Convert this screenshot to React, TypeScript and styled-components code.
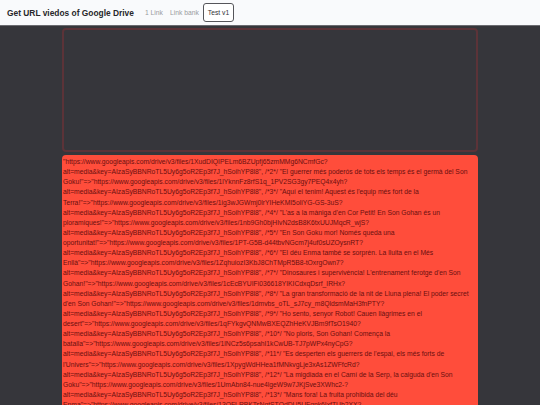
import React from "react"
import styled, { createGlobalStyle } from "styled-components"

const GlobalStyle = createGlobalStyle`
  html, body {
    margin: 0;
    padding: 0;
    height: 100%;
    overflow: hidden;
    background: #36363b;
    font-family: "Liberation Sans", Arial, sans-serif;
  }
`

const Header = styled.header`
  height: 26px;
  box-sizing: border-box;
  display: flex;
  align-items: center;
  padding-left: 7px;
  background: #f9fafc;
  border-bottom: 1px solid #6b6b70;
`

const Title = styled.h1`
  margin: 0 11px 0 0;
  font-size: 8.4px;
  font-weight: 700;
  color: #27272a;
`

const Nav = styled.nav`
  display: flex;
  align-items: center;
  gap: 7px;
`

const NavItem = styled.a<{ $active?: boolean }>`
  font-size: 6.75px;
  color: ${({ $active }) => ($active ? "#333338" : "#9a9aa0")};
  ${({ $active }) =>
    $active &&
    `
    height: 19px;
    box-sizing: border-box;
    display: flex;
    align-items: center;
    margin-left: -3px;
    padding: 0 4px;
    background: #fff;
    border: 1px solid #55555a;
    border-radius: 3px;
  `}
`

const Main = styled.main`
  display: flex;
  flex-direction: column;
  align-items: center;
  gap: 3px;
  padding-top: 2px;
`

const Input = styled.textarea`
  display: block;
  width: 416px;
  height: 124px;
  box-sizing: border-box;
  margin: 0;
  padding: 4px;
  resize: none;
  outline: none;
  background: #36363b;
  border: 2px solid #5c3338;
  border-radius: 4px;
`

const Output = styled.div`
  width: 416px;
  box-sizing: border-box;
  padding: 2px 1px 4px 1px;
  background: #ff4d3b;
  border-radius: 4px;
  font-size: 6.75px;
  line-height: 10.12px;
  color: #6a0f0f;
  overflow-wrap: anywhere;
`

const API = "https://www.googleapis.com/drive/v3/files/"
const KEY = "?alt=media&key=AIzaSyBBNRoTL5Uy6g5oR2Ep3f7J_hSoihYP8l8"

const episodes: [string, string][] = [
  ["El guerrer més poderós de tots els temps és el germà del Son Goku!", "1lYknnFz8rfS1q_1PV2SG3gy7PEQ4x4yh"],
  ["Aquí el tenim! Aquest és l'equip més fort de la Terra!", "1ig3wJGWmj0lrYIHeKMI5oliYG-GS-3uS"],
  ["L'as a la màniga d'en Cor Petit! En Son Gohan és un ploramiques!", "1nb9Gh0bjHIvN2dsB8K6txUUJMqcR_wjS"],
  ["En Son Goku mor! Només queda una oportunitat!", "1PT-G5B-d44tbvNGcm7j4uf0sUZOysnRT"],
  ["El déu Enma també se sorprèn. La lluita en el Més Enllà", "1ZqhuiozI3KbJ8ChTMpR5B8-tOxrgOwn7"],
  ["Dinosaures i supervivència! L'entrenament ferotge d'en Son Gohan!", "1cEcBYUIFi036618YIKICdxqDsrf_IRHx"],
  ["La gran transformació de la nit de Lluna plena! El poder secret d'en Son Gohan!", "1dmvbs_oTL_sJ7cy_m8QldsmMaH3fnPTY"],
  ["Ho sento, senyor Robot! Cauen llàgrimes en el desert", "1qFYkgvQNMwBXEQZhHeKVJBm9fTsO1940"],
  ["No ploris, Son Gohan! Comença la batalla", "1lNCz5s6psahI1kCwUB-TJ7pWPx4nyCpG"],
  ["Es desperten els guerrers de l'espai, els més forts de l'Univers", "1XpygWdHHea1fMNkvgLje3xAs1ZWFfcRd"],
  ["La migdiada en el Camí de la Serp, la caiguda d'en Son Goku", "1UmAbn84-nue4lgeW9w7JKjSve3XWhc2-"],
  ["Mans fora! La fruita prohibida del déu Enma", "13OFLRBKTsNqtSTQdDU5UFqnk6IxfTUb2XX"],
]

const outputText =
  `"${API}1XudDIQIPELm6BZUpfj65zmMMg6NCmfGc${KEY}", ` +
  episodes
    .map(([title, id], i) => `/*${i + 2}*/ "${title}"=>"${API}${id}${KEY}", `)
    .join("")

export default function App() {
  return (
    <>
      <GlobalStyle />
      <Header>
        <Title>Get URL viedos of Google Drive</Title>
        <Nav>
          <NavItem>1 Link</NavItem>
          <NavItem>Link bank</NavItem>
          <NavItem $active>Test v1</NavItem>
        </Nav>
      </Header>
      <Main>
        <Input />
        <Output>{outputText}</Output>
      </Main>
    </>
  )
}
